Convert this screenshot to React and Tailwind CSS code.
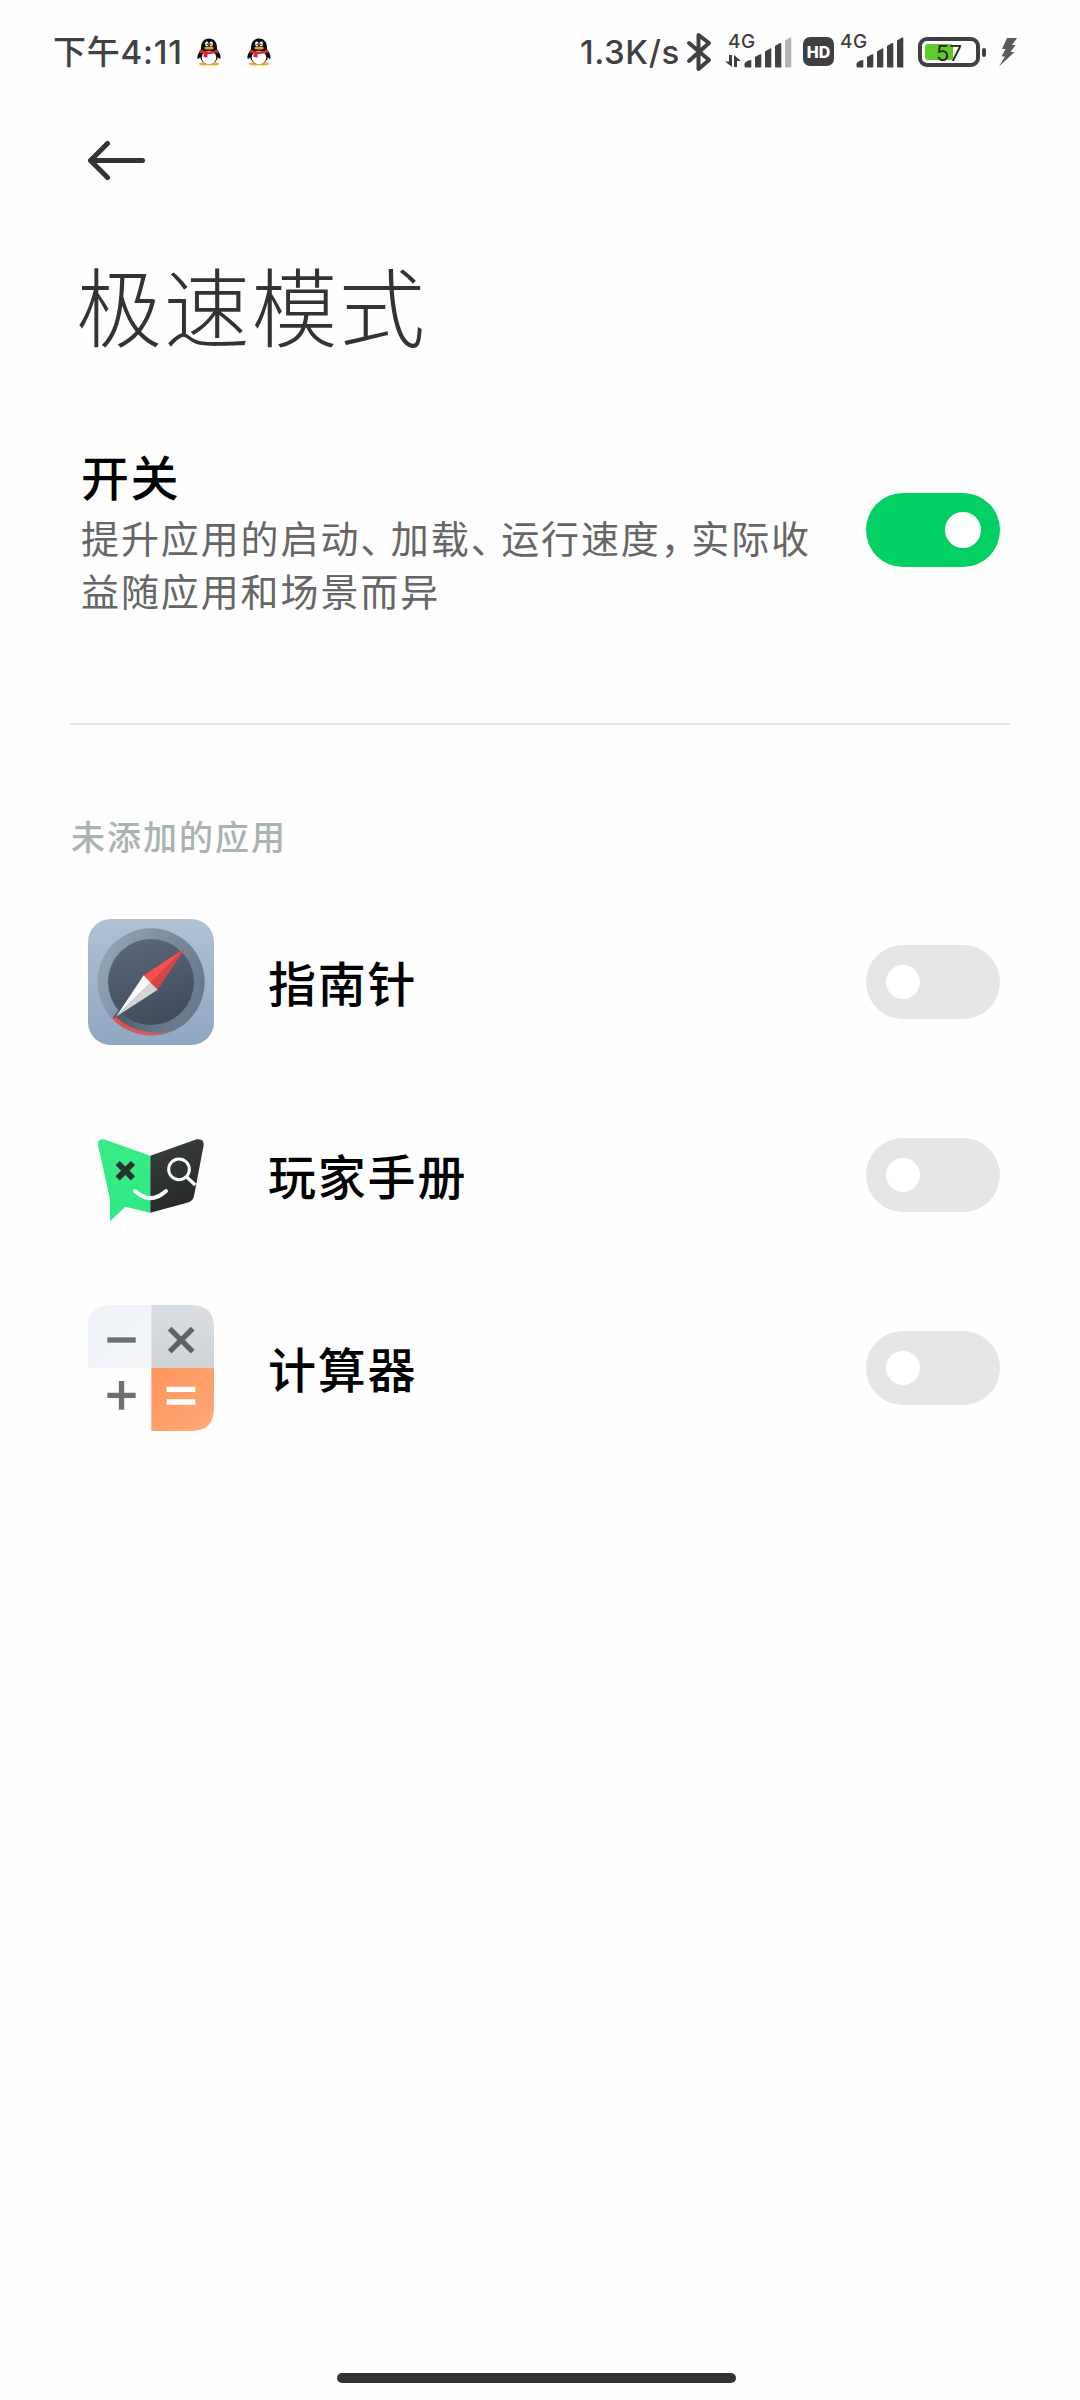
import { useState } from "react";

const apps = [
  { id: "compass", name: "指南针", Icon: CompassIcon },
  { id: "handbook", name: "玩家手册", Icon: HandbookIcon },
  { id: "calculator", name: "计算器", Icon: CalculatorIcon },
];

function PenguinIcon({ className }) {
  return (
    <svg viewBox="0 0 24 28" className={`w-6 h-7 shrink-0 ${className}`}>
      <path d="M3 13 C0 17 0 20 1 21 L5 18 Z M21 13 C24 17 24 20 23 21 L19 18 Z" fill="#0a0a0a" />
      <ellipse cx="7.5" cy="25.8" rx="5.5" ry="1.6" fill="#f0a81c" />
      <ellipse cx="16.5" cy="25.8" rx="5.5" ry="1.6" fill="#f0a81c" />
      <ellipse cx="12" cy="18" rx="9" ry="8.2" fill="#0a0a0a" />
      <ellipse cx="12" cy="19.5" rx="7.3" ry="6.7" fill="#fff" />
      <path d="M4 12 C3.5 4 7 0.5 12 0.5 S20.5 4 20 12 Z" fill="#0a0a0a" />
      <ellipse cx="9.8" cy="6" rx="1.7" ry="2.4" fill="#fff" />
      <ellipse cx="14.2" cy="6" rx="1.7" ry="2.4" fill="#fff" />
      <circle cx="10.2" cy="6.2" r="0.8" fill="#111" />
      <circle cx="13.8" cy="6.2" r="0.8" fill="#111" />
      <ellipse cx="12" cy="10" rx="4.8" ry="1.6" fill="#f5a21b" />
      <path d="M3 11.5 Q12 15.5 21 11.5 L21.5 14.3 Q16 16.3 10.5 16 L10.5 19.5 L6.5 19 L6.8 15.5 L2.5 14.3 Z" fill="#e0242a" />
    </svg>
  );
}

function SignalBars({ last, className }) {
  return (
    <svg viewBox="0 0 48 32" className={`w-12 h-8 ${className}`} fill="#404040">
      <path d="M0.5 28 Q1 25.5 6.5 24 L7.3 24 V31.5 H2 Q0.5 31.5 0.5 30 Z" />
      <path d="M11 21 L16 18.3 Q17.3 18 17.3 19.3 V31.5 H12 Q11 31.5 11 30.5 Z" />
      <path d="M21 15.5 L26 12.5 Q27.3 12 27.3 13.3 V31.5 H22 Q21 31.5 21 30.5 Z" />
      <path d="M31 10 L36 7 Q37.3 6.5 37.3 8 V31.5 H32 Q31 31.5 31 30.5 Z" />
      <path d="M41 4.5 L46 1.5 Q47.3 1 47.3 2.5 V31.5 H42 Q41 31.5 41 30.5 Z" fill={last} />
    </svg>
  );
}

function StatusBar() {
  return (
    <div className="flex h-[104px] pl-[53px] text-[#404040] font-['Inter','Noto_Sans_CJK_SC',sans-serif]">
      <div className="flex w-[144px] shrink-0 items-center pt-[2px] font-medium">
        <span className="text-[33px] tracking-[0.800px] whitespace-nowrap">下午4:11</span>
      </div>
      <PenguinIcon className="mt-[38px]" />
      <PenguinIcon className="mt-[38px] ml-[26px]" />
      <div className="flex w-[109px] shrink-0 items-center pt-[2px] ml-[309px]">
        <span className="text-[33px] font-medium tracking-[0.600px] whitespace-nowrap">1.3K/s</span>
      </div>
      <svg
        viewBox="0 0 26 40"
        className="mt-[32px] -ml-[3px] w-[26px] h-10 shrink-0"
        fill="none"
        stroke="#404040"
        strokeWidth="4"
        strokeLinecap="round"
        strokeLinejoin="round"
      >
        <path d="M3 11 L23 28 L12.5 37 V3 L23 11 L3 29" />
      </svg>
      <div className="relative ml-[13px] mt-9 h-8 w-[67px] shrink-0">
        <span className="absolute left-[3px] -top-[6px] text-[19px] leading-6 font-medium tracking-[0.500px]">4G</span>
        <svg viewBox="0 0 16 13" className="absolute left-0 top-[19px] w-4 h-[13px]" fill="#404040">
          <path d="M4 0 H7 V12 L0 6.5 H4 Z M9 12 V0 L16 6 H12 V12 Z" />
        </svg>
        <SignalBars last="#b4b4b4" className="absolute right-0 top-0" />
      </div>
      <div className="flex items-center justify-center ml-[11px] mt-[37px] w-[31px] h-[29px] shrink-0 rounded-[7px] bg-[#404040] text-white text-[16px] font-extrabold">
        HD
      </div>
      <div className="relative ml-[6px] mt-9 h-8 w-16 shrink-0">
        <span className="absolute left-0 -top-[6px] text-[19px] leading-6 font-medium tracking-[0.500px]">4G</span>
        <SignalBars last="#404040" className="absolute right-0 top-0" />
      </div>
      <div className="flex items-center ml-[14px] mt-[37px] h-[30px] shrink-0">
        <div className="relative w-[62px] h-[30px] rounded-[9px] border-[4px] border-[#404040] p-[3px]">
          <div className="w-7 h-4 rounded-[3px] bg-[#62c92a]" />
          <span className="absolute inset-0 flex items-center justify-center pt-px text-[22px] leading-none text-[#1f2a1a]">
            57
          </span>
        </div>
        <div className="ml-[2px] w-1 h-[9px] rounded-[2px] bg-[#404040]" />
      </div>
      <svg viewBox="0 0 18 29" className="ml-[13px] mt-[38px] w-[18px] h-[29px]" fill="#5a5a5a">
        <path d="M8 0 H18 L13 7 H16.5 L11.5 14 H15.5 L0 28.5 L6 18.5 H2.500 L6.500 11 H3 Z" />
      </svg>
    </div>
  );
}

function Toggle({ checked, onChange, label }) {
  return (
    <button
      type="button"
      role="switch"
      aria-checked={checked}
      aria-label={label}
      onClick={onChange}
      className={`flex w-[134px] h-[74px] shrink-0 items-center rounded-full ${
        checked ? "bg-[#02d062] justify-end pr-[19px]" : "bg-[#e5e5e5] justify-start pl-5"
      }`}
    >
      <span className={`rounded-full bg-white ${checked ? "size-9" : "size-[34px]"}`} />
    </button>
  );
}

function CompassIcon() {
  return (
    <svg viewBox="83 358 378 378" className="size-[126px] shrink-0">
      <defs>
        <linearGradient id="compassBg" x1="0" y1="0" x2="0" y2="1">
          <stop offset="0" stopColor="#b0c1d5" />
          <stop offset="1" stopColor="#90a7c1" />
        </linearGradient>
        <linearGradient id="compassRing" x1="0" y1="0.2" x2="1" y2="0.6">
          <stop offset="0" stopColor="#93a5b8" />
          <stop offset="1" stopColor="#66788b" />
        </linearGradient>
        <linearGradient id="compassShade" x1="0" y1="0" x2="1" y2="0">
          <stop offset="0" stopColor="#465465" />
          <stop offset="1" stopColor="#5f7083" stopOpacity="0" />
        </linearGradient>
        <linearGradient id="compassFace" x1="0" y1="0" x2="0.3" y2="1">
          <stop offset="0" stopColor="#5c6a7d" />
          <stop offset="1" stopColor="#414d5d" />
        </linearGradient>
        <linearGradient id="compassArc" x1="0" y1="0" x2="1" y2="0">
          <stop offset="0" stopColor="#f04848" />
          <stop offset="0.6" stopColor="#dd5a5e" />
          <stop offset="1" stopColor="#b0606c" stopOpacity="0" />
        </linearGradient>
      </defs>
      <rect x="83" y="358" width="378" height="378" rx="68" fill="url(#compassBg)" />
      <circle cx="272" cy="547" r="161" fill="url(#compassRing)" />
      <path d="M157 655 A161 161 0 0 0 400 644 L360 610 H190 Z" fill="url(#compassShade)" />
      <path d="M155 655 A161 161 0 0 0 362 680 A170 170 0 0 1 168 653 Z" fill="url(#compassArc)" />
      <circle cx="272" cy="547" r="129" fill="url(#compassFace)" />
      <path d="M375 445 L250 527 L271 549 Z" fill="#fb4e4e" />
      <path d="M375 445 L292 570 L271 549 Z" fill="#d74446" />
      <path d="M167 651 L250 527 L271 549 Z" fill="#fafafa" />
      <path d="M167 651 L292 570 L271 549 Z" fill="#d5d5d5" />
    </svg>
  );
}

function HandbookIcon() {
  return (
    <svg viewBox="54 6 378 378" className="size-[126px] shrink-0">
      <defs>
        <linearGradient id="bookLeft" x1="0" y1="0" x2="0" y2="1">
          <stop offset="0" stopColor="#3aeb88" />
          <stop offset="1" stopColor="#2dea82" />
        </linearGradient>
        <linearGradient id="bookRight" x1="0" y1="0" x2="0.3" y2="1">
          <stop offset="0" stopColor="#393f3c" />
          <stop offset="1" stopColor="#262a28" />
        </linearGradient>
      </defs>
      <path d="M106 89 L241 137 V308 L166 290 L120 334 V268 L84 106 Q82 84 106 89 Z" fill="url(#bookLeft)" />
      <path d="M241 137 L380 88 Q402 84 401 106 L372 258 Q368 276 346 280 L241 308 Z" fill="url(#bookRight)" />
      <path d="M143 159 L189 205 M189 159 L143 205" stroke="#26332c" strokeWidth="18" />
      <circle cx="327" cy="178" r="31" fill="none" stroke="#fff" strokeWidth="9" />
      <path d="M350 201 L376 225" stroke="#fff" strokeWidth="10" />
      <path d="M195 243 Q241 286 288 243" fill="none" stroke="#fff" strokeWidth="12" strokeLinecap="round" />
    </svg>
  );
}

function CalculatorIcon() {
  return (
    <svg viewBox="53 45 378 378" className="size-[126px] shrink-0">
      <defs>
        <linearGradient id="calcMinus" x1="0" y1="0" x2="1" y2="1">
          <stop offset="0" stopColor="#eef3f8" />
          <stop offset="1" stopColor="#f3f6f9" />
        </linearGradient>
        <linearGradient id="calcTimes" x1="0" y1="0" x2="0" y2="1">
          <stop offset="0" stopColor="#d9dee3" />
          <stop offset="1" stopColor="#cfd4d9" />
        </linearGradient>
        <linearGradient id="calcEquals" x1="0" y1="0" x2="1" y2="1">
          <stop offset="0" stopColor="#ff945a" />
          <stop offset="1" stopColor="#ffaa7a" />
        </linearGradient>
      </defs>
      <path d="M53 234 V113 Q53 45 121 45 H243 V234 Z" fill="url(#calcMinus)" />
      <path d="M243 45 H363 Q431 45 431 113 V234 H243 Z" fill="url(#calcTimes)" />
      <path d="M243 234 H431 V355 Q431 423 363 423 H243 Z" fill="url(#calcEquals)" />
      <g fill="none" stroke="#6d6f71" strokeWidth="16">
        <path d="M111 150 H196" />
        <path d="M111 316 H196 M153.500 273 V359" />
        <path d="M298 116 L367 185 M367 116 L298 185" stroke="#606366" />
      </g>
      <path d="M289 298 H375 M289 336 H375" stroke="#fff" strokeWidth="16" />
    </svg>
  );
}

export default function App() {
  const [enabled, setEnabled] = useState(true);
  const [added, setAdded] = useState({});

  const toggleApp = (id) => {
    setAdded({ ...added, [id]: !added[id] });
  };

  return (
    <div
      lang="zh-CN"
      className="flex flex-col w-[1080px] h-[2400px] overflow-hidden bg-[#fefefe] font-['Noto_Sans_CJK_SC',sans-serif]"
    >
      <StatusBar />

      <header className="pt-9">
        <button type="button" aria-label="返回" className="block ml-[86px]">
          <svg
            viewBox="0 0 62 42"
            className="block w-[62px] h-[42px]"
            fill="none"
            stroke="#333"
            strokeWidth="5"
            strokeLinecap="round"
            strokeLinejoin="round"
          >
            <path d="M4.500 20.500 H56.500 M21.500 3.500 L4.500 20.500 L21.500 37.500" />
          </svg>
        </button>
        <h1 className="mt-[58px] ml-[76px] text-[86px] leading-[128px] tracking-[1.700px] font-light text-[#333]">
          极速模式
        </h1>
      </header>

      <section className="flex ml-[81px] mr-20 mt-[78px] h-[180px]">
        <div className="flex-1 -mt-[6px] whitespace-nowrap">
          <h2 className="text-[48px] leading-[70px] tracking-[1.500px] font-medium text-black">开关</h2>
          <p className="text-[38px] leading-[53px] tracking-[1.900px] text-[#666]">
            提升应用的启动<span className="tracking-[-7.500px]">、</span>加载
            <span className="tracking-[-7.500px]">、</span>运行速度
            <span className="tracking-[-7.500px]">，</span>实际收
            <br />
            益随应用和场景而异
          </p>
        </div>
        <div className="mt-[47px]">
          <Toggle checked={enabled} onChange={() => setEnabled(!enabled)} label="开关" />
        </div>
      </section>

      <hr className="mx-[70px] mt-[97px] border-0 h-[2px] bg-[#e5e5e5]" />

      <h3 className="mt-[86px] ml-[71px] text-[34px] leading-[50px] tracking-[2px] font-medium text-[#a9b4ae]">
        未添加的应用
      </h3>

      <ul className="mt-6">
        {apps.map(({ id, name, Icon }) => (
          <li key={id} className="flex h-[193px] items-center pl-[87.500px] pr-[80px]">
            <Icon />
            <span className="flex-1 mb-[2px] ml-[54.500px] text-[48px] leading-[72px] tracking-[1.800px] font-medium text-black">
              {name}
            </span>
            <Toggle checked={!!added[id]} onChange={() => toggleApp(id)} label={name} />
          </li>
        ))}
      </ul>

      <div className="mt-auto mb-[17px] ml-[337px] w-[399px] h-[10px] rounded-full bg-[#333]" />
    </div>
  );
}
